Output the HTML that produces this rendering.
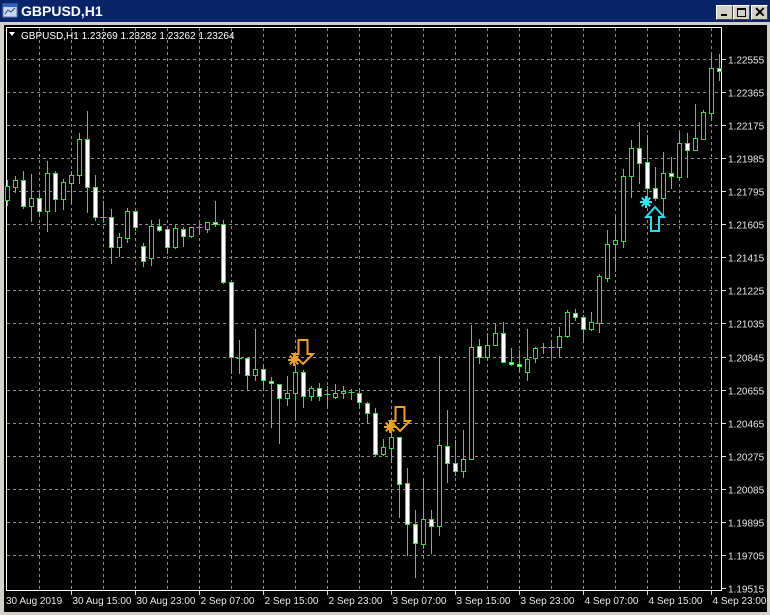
<!DOCTYPE html>
<html><head><meta charset="utf-8"><style>
html,body{margin:0;padding:0;}
body{width:770px;height:615px;background:#d4d0c8;position:relative;overflow:hidden;font-family:"Liberation Sans",sans-serif;}
#title{position:absolute;left:0;top:0;width:770px;height:22px;background:#0a246a;}
#title .t{position:absolute;left:21px;top:3px;color:#fff;font-weight:bold;font-size:14px;}
.btn{position:absolute;top:5px;width:15px;height:13px;background:#d4d0c8;border-top:1px solid #fff;border-left:1px solid #fff;border-right:1px solid #404040;border-bottom:1px solid #404040;}
#chart{position:absolute;left:4px;top:25px;width:763px;height:587px;background:#000;}
svg{position:absolute;left:0;top:0;}
</style></head><body>
<div id="title">
<svg width="20" height="22"><rect x="3" y="4" width="14" height="13" fill="#c8d8f0" stroke="#6080b0"/><rect x="3" y="4" width="14" height="3" fill="#3060c0"/><path d="M5 14 L8 10 L11 12 L15 8" stroke="#204090" fill="none"/></svg>
<div class="t">GBPUSD,H1</div>
<div class="btn" style="left:716px"><div style="position:absolute;left:4px;top:8px;width:6px;height:2px;background:#000"></div></div>
<div class="btn" style="left:733px"><div style="position:absolute;left:3px;top:2px;width:7px;height:6px;border:1px solid #000;border-top-width:2px"></div></div>
<div class="btn" style="left:751px"><div style="position:absolute;left:2px;top:-2px;font-size:14px;font-weight:bold;color:#000">✕</div></div>
</div>
<div id="chart"></div>
<svg id="s" width="770" height="615" font-family="Liberation Sans, sans-serif" font-size="10"></svg>
<script>
var C=[
[180,186,200,205,0],[176,180,187,192,0],[171,180,206,208,1],[174,198,206,221,0],[193,198,211,215,1],
[161,173,211,231,0],[171,173,199,211,1],[179,182,199,209,0],[171,175,183,203,0],[133,139,175,183,0],
[111,139,187,212,1],[175,187,217,220,1],[201,217,217,222,2],[209,217,247,263,1],[233,237,247,256,0],
[208,211,238,242,0],[211,211,227,230,1],[243,246,261,266,1],[220,226,258,265,0],[219,226,230,231,1],
[227,229,247,253,1],[225,228,247,248,0],[227,229,236,246,1],[227,227,236,237,0],[223,227,227,233,2],
[222,222,229,232,0],[201,222,224,226,1],[220,224,282,283,1],[282,282,357,373,1],[340,358,358,373,2],
[357,358,375,390,1],[329,369,375,380,0],[365,369,380,389,1],[377,381,383,427,1],[384,384,398,443,1],
[376,393,398,405,0],[367,372,393,419,0],[370,372,396,407,1],[386,388,396,400,0],[383,388,396,400,1],
[386,394,394,408,2],[384,393,397,398,0],[386,391,393,398,0],[389,392,392,399,2],[388,393,402,407,1],
[402,403,413,423,1],[408,413,454,455,1],[439,447,454,455,0],[432,437,448,462,0],[437,437,484,517,1],
[468,483,524,555,1],[510,524,543,577,1],[478,519,544,548,0],[510,519,526,553,1],[356,445,526,535,0],
[410,446,463,482,1],[440,463,471,475,1],[430,459,471,477,0],[325,347,459,459,0],[339,346,357,363,1],
[333,345,357,360,0],[323,333,345,345,0],[322,333,362,362,1],[348,362,364,365,1],[350,364,366,372,1],
[329,359,372,380,0],[347,348,358,362,0],[343,347,347,353,2],[340,347,347,357,2],[327,336,347,357,0],
[310,312,336,337,0],[309,313,317,320,1],[315,317,329,342,1],[312,322,329,330,0],[274,276,323,332,0],
[230,244,278,281,0],[217,240,244,271,0],[169,176,241,247,0],[140,148,176,197,0],[122,148,163,183,1],
[135,162,188,197,1],[167,188,198,200,1],[152,173,198,215,0],[157,173,176,188,1],[133,143,177,180,0],
[133,143,150,177,1],[104,138,150,150,0],[110,112,139,139,0],[55,68,113,120,0],[54,68,71,80,1]];
var h='';
var prices=['1.22555','1.22365','1.22175','1.21985','1.21795','1.21605','1.21415','1.21225','1.21035','1.20845','1.20655','1.20465','1.20275','1.20085','1.19895','1.19705','1.19515'];
for(var i=0;i<17;i++){var y=Math.round(59+i*33.06)+0.5;
 if(i<16)h+='<line x1="7" x2="721" y1="'+y+'" y2="'+y+'" stroke="#8c8c8c" stroke-dasharray="3,3"/>';
 h+='<line x1="721" x2="726" y1="'+y+'" y2="'+y+'" stroke="#ddd"/>';
 h+='<text x="728" y="'+(y+4)+'" fill="#e8e8e8">'+prices[i]+'</text>';}
for(var m=1;m<23;m++){var x=7+32*m+0.5;h+='<line x1="'+x+'" x2="'+x+'" y1="28" y2="590" stroke="#8c8c8c" stroke-dasharray="3,3"/>';}
var times=['30 Aug 15:00','30 Aug 23:00','2 Sep 07:00','2 Sep 15:00','2 Sep 23:00','3 Sep 07:00','3 Sep 15:00','3 Sep 23:00','4 Sep 07:00','4 Sep 15:00','4 Sep 23:00'];
h+='<text x="6" y="604" fill="#e8e8e8">30 Aug 2019</text>';
for(var j=0;j<11;j++){var x=71+64*j+0.5;h+='<line x1="'+x+'" x2="'+x+'" y1="590" y2="595" stroke="#ddd"/>';h+='<text x="'+(x+1)+'" y="604" fill="#e8e8e8">'+times[j]+'</text>';}
h+='<rect x="6.5" y="27.5" width="715" height="563" fill="none" stroke="#fff"/>';
var g='#32e632';
h+='<g shape-rendering="crispEdges">';
for(var k=0;k<C.length;k++){var c=C[k],x=7+8*k+0.5;
 h+='<line x1="'+x+'" x2="'+x+'" y1="'+c[0]+'" y2="'+(c[3]+1)+'" stroke="'+g+'"/>';
 if(c[4]==2||c[2]-c[1]<1){h+='<line x1="'+(x-3)+'" x2="'+(x+3)+'" y1="'+(c[1]+0.5)+'" y2="'+(c[1]+0.5)+'" stroke="'+g+'"/>';}
 else h+='<rect x="'+(x-2)+'" y="'+(c[1]+0.5)+'" width="4" height="'+(c[2]-c[1])+'" fill="'+(c[4]?'#fff':'#000')+'" stroke="'+g+'"/>';}
h+='</g>';
function star(cx,cy,col){var s='';for(var a=0;a<4;a++){var an=a*Math.PI/4,dx=6*Math.cos(an),dy=6*Math.sin(an);s+='<line x1="'+(cx-dx)+'" y1="'+(cy-dy)+'" x2="'+(cx+dx)+'" y2="'+(cy+dy)+'" stroke="'+col+'" stroke-width="2"/>';}s+='<circle cx="'+cx+'" cy="'+cy+'" r="3" fill="'+col+'"/>';return s;}
function down(x,y,col){return '<path d="M'+(x-4.5)+' '+y+' H'+(x+4.5)+' V'+(y+14)+' H'+(x+10)+' L'+x+' '+(y+24)+' L'+(x-10)+' '+(y+14)+' H'+(x-4.5)+' Z" fill="none" stroke="'+col+'" stroke-width="2"/>';}
function up(x,y,col){return '<path d="M'+(x-4)+' '+(y+24)+' H'+(x+4)+' V'+(y+10)+' H'+(x+9)+' L'+x+' '+y+' L'+(x-9)+' '+(y+10)+' H'+(x-4)+' Z" fill="none" stroke="'+col+'" stroke-width="2"/>';}
var o='#f0a020';
h+=down(303,340,o)+star(294,360,o)+down(400,407,o)+star(390,427,o);
h+=up(655,207,'#20e0f0')+star(646,202,'#20f0f0');
h+='<path d="M9 32 L15 32 L12 36 Z" fill="#fff"/>';
h+='<text x="21" y="39" fill="#fff">GBPUSD,H1  1.23269 1.23282 1.23262 1.23264</text>';
document.getElementById('s').innerHTML=h;
</script>
</body></html>
